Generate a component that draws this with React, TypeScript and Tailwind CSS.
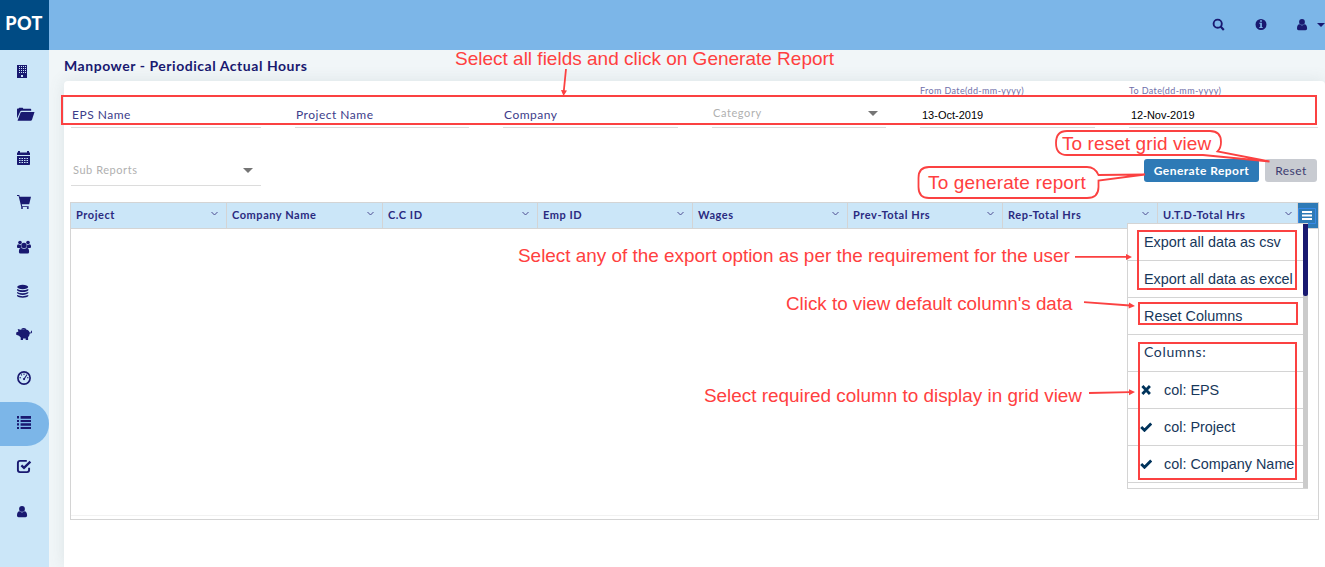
import React from "react";

const LATO = "font-['Lato',sans-serif]";
const ARIAL = "font-['Liberation_Sans',Arial,sans-serif]";

function Icon({ children, className = "" }: { children: React.ReactNode; className?: string }) {
  return (
    <svg width="16" height="16" viewBox="0 0 16 16" fill="currentColor" className={`shrink-0 overflow-visible ${className}`}>
      {children}
    </svg>
  );
}

const UserIcon = ({ className = "" }: { className?: string }) => (
  <Icon className={className}>
    <circle cx="5" cy="4.9" r="2.9" />
    <path d="M0 11.6c0-2.6.8-4.300 2.600-4.300C3.300 8 4 8.400 5 8.400s1.700-.4 2.400-1.100c1.800 0 2.700 1.700 2.700 4.300 0 1-.7 1.700-1.600 1.700h-6.900C.7 13.300 0 12.600 0 11.600z" />
  </Icon>
);

const sideIcons: { name: string; icon: React.ReactNode }[] = [
  {
    name: "projects",
    icon: (
      <Icon>
        <path
          fillRule="evenodd"
          d="M0 1h10v13H0zM2 2v1h1v-1zm2 0v1h1v-1zm2 0v1h1v-1zm2 0v1h1v-1zM2 4v1h1v-1zm2 0v1h1v-1zm2 0v1h1v-1zm2 0v1h1v-1zM2 6v1h1v-1zm2 0v1h1v-1zm2 0v1h1v-1zm2 0v1h1v-1zM2 8v1h1v-1zm2 0v1h1v-1zm2 0v1h1v-1zm2 0v1h1v-1zM4 11v2h2v-2z"
        />
      </Icon>
    ),
  },
  {
    name: "files",
    icon: (
      <Icon className="mb-[1.400px]">
        <path d="M0 11.500V2.300Q0 1.500.8 1.500h.9L2.200.8h3.500l.6.900h7.200q.7 0 .7.700v1.400H4.500q-1 0-1.400.9z" />
        <path d="M4.700 5h12.800L15 12.700q-.4 1-1.300 1H.5L3.500 5.800Q3.900 5 4.700 5z" />
      </Icon>
    ),
  },
  {
    name: "calendar",
    icon: (
      <Icon className="mb-[2px]">
        <path
          fillRule="evenodd"
          d="M0 1.500h1V0h2v1.500h7V0h2v1.500h1V4H0zM0 5h13v8.200q0 .8-.8.800H.8q-.8 0-.8-.8zM2 7v1h1.500V7zm2.500 0v1H6V7zM7 7v1h1.500V7zm2.500 0v1H11V7zM2 9v1h1.500V9zm2.500 0v1H6V9zM7 9v1h1.500V9zm2.500 0v1H11V9zM2 11v1h1.500v-1zm2.500 0v1H6v-1zM7 11v1h1.500v-1zm2.500 0v1H11v-1z"
        />
      </Icon>
    ),
  },
  {
    name: "cart",
    icon: (
      <Icon className="mb-[2px]">
        <path d="M0 0h2.300l.4 1.800H14l-1.800 7.400H4.800l.4 2h6.500v.9H4.300L1.600 1H0z" />
        <circle cx="5" cy="12.900" r="1" />
        <circle cx="10.800" cy="12.900" r="1" />
      </Icon>
    ),
  },
  {
    name: "teams",
    icon: (
      <Icon>
        <circle cx="3" cy="2.600" r="1.800" />
        <circle cx="11" cy="2.600" r="1.800" />
        <circle cx="7" cy="5.400" r="2.700" />
        <path d="M0 7V6q0-1.500 1.500-1.800.8.800 2.300.7.100 1.500 1 2.500L3.300 8H1Q0 8 0 7zM14 7V6q0-1.500-1.500-1.800-.8.800-2.300.7-.1 1.500-1 2.500l1.500.6H13q1 0 1-1zM1.900 12q0-3.700 2-4.200 3.100 2 6.200 0 2 .5 2 4.200 0 1.600-1.600 1.600h-7q-1.600 0-1.600-1.600z" />
      </Icon>
    ),
  },
  {
    name: "database",
    icon: (
      <Icon>
        <ellipse cx="5.700" cy="3" rx="5.500" ry="2.200" />
        <path d="M0 5q5.500 2.600 11.300 0v1.200Q10 8 5.700 8T0 6.200zM0 8q5.500 2.500 11.300 0v1.100q-1.300 1.800-5.600 1.800T0 9.100zM0 11q5.500 2.300 11.300 0v1.100Q10 13.800 5.700 13.800T0 12.100z" />
      </Icon>
    ),
  },
  {
    name: "savings",
    icon: (
      <Icon className="mb-[2px]">
        <path d="M4.200 1.900Q6.500.100 9.300 1.900l-.4.700q-2.100-1-4.300 0zM.7 2l3 .700q1.200-.5 3.300-.5 4.500 0 5.700 3.300 1 .3 1.300-.3l-.1-1.200.8-.5.400 1.700q0 1.300-2.300 1.400-.3 2.300-1.700 3.500V13H8.700v-1.600H6V13H3.700v-2.500L2 8.800-.8 7.700V5.500l2.200-.9z" />
      </Icon>
    ),
  },
  {
    name: "dashboard",
    icon: (
      <Icon className="mb-[2px]">
        <circle cx="7" cy="7" r="6.100" fill="none" stroke="currentColor" strokeWidth="1.700" />
        <path d="M6.500 2.500h1V4h-1zM3.700 3.700l.8-.6.8 1.100-.7.600zM2.500 6.300H4v1H2.500zM10 6.300h1.500v1H10zM9.700 3.200l.8.600-2.400 3.600q.3 1.700-1.100 1.800-1.500-.2-1-1.600.4-.7 1.100-.6z" />
      </Icon>
    ),
  },
  {
    name: "reports",
    icon: (
      <Icon>
        <path d="M0 0h2v2.500H0zM3.600 0H14v2.800H3.600zM0 4h2v2H0zM3.600 4H14v2H3.600zM0 7.200h2v2.300H0zM3.600 7.200H14v2.500H3.600zM0 11h2v2H0zM3.600 11H14v2H3.600z" />
      </Icon>
    ),
  },
  {
    name: "approvals",
    icon: (
      <Icon>
        <path
          d="M9.800.900H3Q.9.900.9 3v7q0 2.100 2.100 2.100h7q2.100 0 2.100-2.100V7.800"
          fill="none"
          stroke="currentColor"
          strokeWidth="1.900"
        />
        <path d="m4.400 5.400 2.600 2.500 6.400-6.300" fill="none" stroke="currentColor" strokeWidth="2.300" />
      </Icon>
    ),
  },
  { name: "profile", icon: <UserIcon /> },
];

function Field({ label, width, children }: { label?: string; width: string; children: React.ReactNode }) {
  return (
    <div className={`relative flex h-[47px] flex-col justify-end border-b border-[#dcdcdc] ${width}`}>
      {label && (
        <span className="absolute left-0 top-[4px] whitespace-nowrap text-[9px] leading-[12px] tracking-[0.370px] text-[#7070aa]">
          {label}
        </span>
      )}
      {children}
    </div>
  );
}

const Triangle = () => (
  <svg width="10" height="5" viewBox="0 0 10 5" className="shrink-0">
    <path d="M0 0h10L5 5z" fill="#757575" />
  </svg>
);

const columns = [
  { title: "Project", width: "w-[156px] pr-[8px]" },
  { title: "Company Name", width: "w-[156px] pr-[8px]" },
  { title: "C.C ID", width: "w-[155px] pr-[8px]" },
  { title: "Emp ID", width: "w-[155px] pr-[8px]" },
  { title: "Wages", width: "w-[155px] pr-[8px]" },
  { title: "Prev-Total Hrs", width: "w-[155px] pr-[8px]" },
  { title: "Rep-Total Hrs", width: "w-[155px] pr-[8px]" },
  { title: "U.T.D-Total Hrs", width: "w-[140px] pr-[5px]" },
];

const toggles = [
  { title: "col: EPS", on: false },
  { title: "col: Project", on: true },
  { title: "col: Company Name", on: true },
];

function GridMenu() {
  const row = "flex h-[37px] shrink-0 items-center border-b border-[#d4d4d4] pl-[16px] whitespace-nowrap";
  return (
    <div className="absolute left-[1127px] top-[223px] flex h-[266px] w-[181px] overflow-hidden border-b border-l border-t border-[#d4d4d4] bg-white text-[#17375a]">
      <div className={`flex w-[175px] flex-col text-[14.400px] ${ARIAL}`}>
        <div className={`${row} pt-[2px]`}>Export all data as csv</div>
        <div className={`${row} pt-[2px]`}>Export all data as excel</div>
        <div className={`${row} pt-[2px]`}>Reset Columns</div>
        <div className={`${row} pb-[3px] text-[14px] tracking-[0.650px] ${LATO}`}>Columns:</div>
        {toggles.map((t) => (
          <div key={t.title} className="flex h-[37px] shrink-0 items-center border-b border-[#d4d4d4] pl-[12px] pt-[2px] whitespace-nowrap">
            <svg width="12" height="10" viewBox="0 0 12 10" fill="none" stroke="#00335b" strokeWidth="2.800" className="mb-[2px] mr-[12px] shrink-0">
              {t.on ? <path d="m1.200 5 3.300 3.300L11.200 1.500" /> : <path d="m2.400 1 7.500 8M9.900 1 2.400 9" />}
            </svg>
            {t.title}
          </div>
        ))}
      </div>
      <div className="flex w-[5px] flex-col bg-[#cbcbcb]">
        <div className="h-[72px] rounded-b-[2px] bg-[#191970]" />
      </div>
    </div>
  );
}

function Note({ className, children }: { className: string; children: string }) {
  return (
    <span className={`absolute whitespace-nowrap leading-[20px] text-[#ff4040] ${ARIAL} ${className}`}>
      {children}
    </span>
  );
}

function Annotations() {
  const box = "absolute border-2 border-[#fb4141]";
  return (
    <>
      <div className={`${box} left-[61px] top-[95px] h-[30px] w-[1256px]`} />
      <div className={`${box} left-[1137px] top-[230px] h-[60px] w-[160px]`} />
      <div className={`${box} left-[1138px] top-[302px] h-[23px] w-[160px]`} />
      <div className={`${box} left-[1138px] top-[342px] h-[138px] w-[159px]`} />
      <svg className="pointer-events-none absolute left-0 top-0" width="1325" height="567" fill="none" stroke="#fb4141" strokeWidth="1.800">
        <path d="M566 69 563.800 91M1075 256.800H1127M1084 302.200 1130 305.500M1089 393 1130 392.200" />
        <path stroke="none" fill="#fb4141" d="m561 90 6 .5-3.500 5.500zM1126 254v6l6-3zM1129 302.500l-.4 6 6.400-2.500zM1129 389.200v6l6-3.100z" />
        <path
          fill="#fff"
          d="M1067 131H1210Q1221 131 1221 142 1221 148 1217.500 151.500L1269.500 161.500 1203 155H1067Q1056 155 1056 143T1067 131z"
        />
        <path
          fill="#fff"
          d="M929 167H1087Q1095 167 1098.500 175L1145 174.500 1098.500 180.500V187Q1098.500 198 1087 198H929Q918.500 198 918.500 187V178Q918.500 167 929 167z"
        />
      </svg>
      <Note className="left-[455px] top-[49px] text-[19px]">Select all fields and click on Generate Report</Note>
      <Note className="left-[1062px] top-[134px] text-[19px] tracking-[0.080px]">To reset grid view</Note>
      <Note className="left-[928px] top-[173px] text-[19px] tracking-[0.150px]">To generate report</Note>
      <Note className="left-[518px] top-[246px] text-[18.920px]">
        Select any of the export option as per the requirement for the user
      </Note>
      <Note className="left-[786px] top-[294px] text-[18.800px]">Click to view default column's data</Note>
      <Note className="left-[704px] top-[386px] text-[18.900px]">Select required column to display in grid view</Note>
    </>
  );
}

export default function App() {
  const fieldText = "pl-px pb-[4px] text-[12px] leading-[16px] tracking-[0.500px] text-[#3c3c8a]";
  const dateText = `pl-[2px] pb-[5px] text-[11px] leading-[13px] text-black ${ARIAL}`;
  return (
    <div className={`relative flex h-[567px] w-[1325px] flex-col overflow-hidden bg-[#f1f6f8] text-[#191970] ${LATO}`}>
      <header className="flex h-[50px] shrink-0 bg-[#7cb6e8]">
        <div className="flex w-[49px] items-center justify-center bg-[#004b84] pb-[3px] pr-px text-[18px] font-black tracking-[0.300px] text-white">
          POT
        </div>
        <div className="flex flex-1 items-center justify-end">
          <Icon className="mr-[27px]">
            <circle cx="5.700" cy="6.700" r="4.100" fill="none" stroke="currentColor" strokeWidth="1.900" />
            <path d="m8.600 9.600 3.200 3.300" stroke="currentColor" strokeWidth="2.200" />
          </Icon>
          <Icon className="mr-[26px]">
            <path
              fillRule="evenodd"
              d="M6 2a5.500 5.500 0 1 0 0 11 5.500 5.500 0 0 0 0-11zM5.100 3.300h1.800v1.500H5.100zM4.300 5.800h2.600v4.300h.8v1H4.300v-1h.9V6.800h-.9z"
            />
          </Icon>
          <UserIcon className="mr-[4px]" />
          <svg width="8" height="4" viewBox="0 0 8 4" className="shrink-0">
            <path d="M0 0h8L4 4z" fill="#191970" />
          </svg>
        </div>
      </header>

      <div className="flex min-h-0 flex-1">
        <nav className="flex w-[49px] shrink-0 flex-col bg-[#cbe6f8]">
          {sideIcons.map((s) => (
            <div
              key={s.name}
              className={
                s.name === "reports"
                  ? "flex h-[44px] items-center rounded-r-[22px] bg-[#7cb6e8] pl-[17px]"
                  : "flex h-[44px] items-center pl-[17px]"
              }
            >
              {s.icon}
            </div>
          ))}
        </nav>

        <main className="flex min-w-0 flex-1 flex-col pl-[15px]">
          <h1 className="flex h-[31px] shrink-0 items-center text-[14px] font-bold tracking-[0.540px]">
            Manpower - Periodical Actual Hours
          </h1>
          <section className="flex min-h-0 flex-1 flex-col rounded-t-[4px] bg-white px-[6px] shadow-[0_0_16px_rgba(100,120,120,0.14)]">
            <div className="flex gap-[34px] pl-px">
              <Field width="w-[190px]">
                <span className={fieldText}>EPS Name</span>
              </Field>
              <Field width="w-[174px]">
                <span className={fieldText}>Project Name</span>
              </Field>
              <Field width="w-[175px]">
                <span className={fieldText}>Company</span>
              </Field>
              <Field width="w-[174px]">
                <div className="flex items-center justify-between pb-[6px] pl-px pr-[8px] text-[11px] leading-[16px] tracking-[0.600px] text-[#b0b0b0]">
                  Category
                  <Triangle />
                </div>
              </Field>
              <Field label="From Date(dd-mm-yyyy)" width="w-[175px]">
                <span className={dateText}>13-Oct-2019</span>
              </Field>
              <Field label="To Date(dd-mm-yyyy)" width="w-[189px]">
                <span className={dateText}>12-Nov-2019</span>
              </Field>
            </div>

            <div className="flex h-[74px] shrink-0 justify-between pl-px">
              <div className="mt-[30px] flex h-[28px] w-[190px] items-center justify-between border-b border-[#dcdcdc] pb-[2px] pl-[2px] pr-[8px] text-[11px] tracking-[0.550px] text-[#b0b0b0]">
                Sub Reports
                <Triangle />
              </div>
              <div className="mr-[2px] mt-[31px] flex h-[23px] gap-[6px] text-[12px] tracking-[0.450px]">
                <button className="w-[115px] rounded-[3px] bg-[#2e7ab6] font-bold text-white">Generate Report</button>
                <button className="w-[52px] rounded-[3px] bg-[#c8cbd1] text-[#3c3c70]">Reset</button>
              </div>
            </div>

            <div className="flex h-[318px] w-[1249px] shrink-0 flex-col border border-[#d4d4d4]">
              <div className="flex h-[26px] shrink-0 border-b border-[#d4d4d4] bg-[#cbe6f8]">
                {columns.map((c) => (
                  <div
                    key={c.title}
                    className={`flex shrink-0 items-center justify-between border-r border-[#d4d4d4] pl-[5px] pb-px text-[11px] font-bold tracking-[0.550px] text-[#2a2a80] ${c.width}`}
                  >
                    {c.title}
                    <svg width="7" height="5" viewBox="0 0 7 5" fill="none" stroke="#4d4d91" className="mb-[3px] shrink-0">
                      <path d="m.5 1 3 3 3-3" />
                    </svg>
                  </div>
                ))}
                <div className="flex flex-1 items-center bg-[#2e7ab6] pt-px">
                  <svg width="18" height="16" viewBox="0 0 18 16">
                    <path d="M.5.500h17v15H.5z" fill="none" stroke="#3889e6" />
                    <path d="M4 3h10v2H4zM4 6.500h10v2H4zM4 10h10v2H4z" fill="#fff" />
                  </svg>
                </div>
              </div>
              <div className="h-[287px] border-b border-[#f2f2f2]" />
            </div>
          </section>
        </main>
      </div>

      <GridMenu />
      <Annotations />
    </div>
  );
}
